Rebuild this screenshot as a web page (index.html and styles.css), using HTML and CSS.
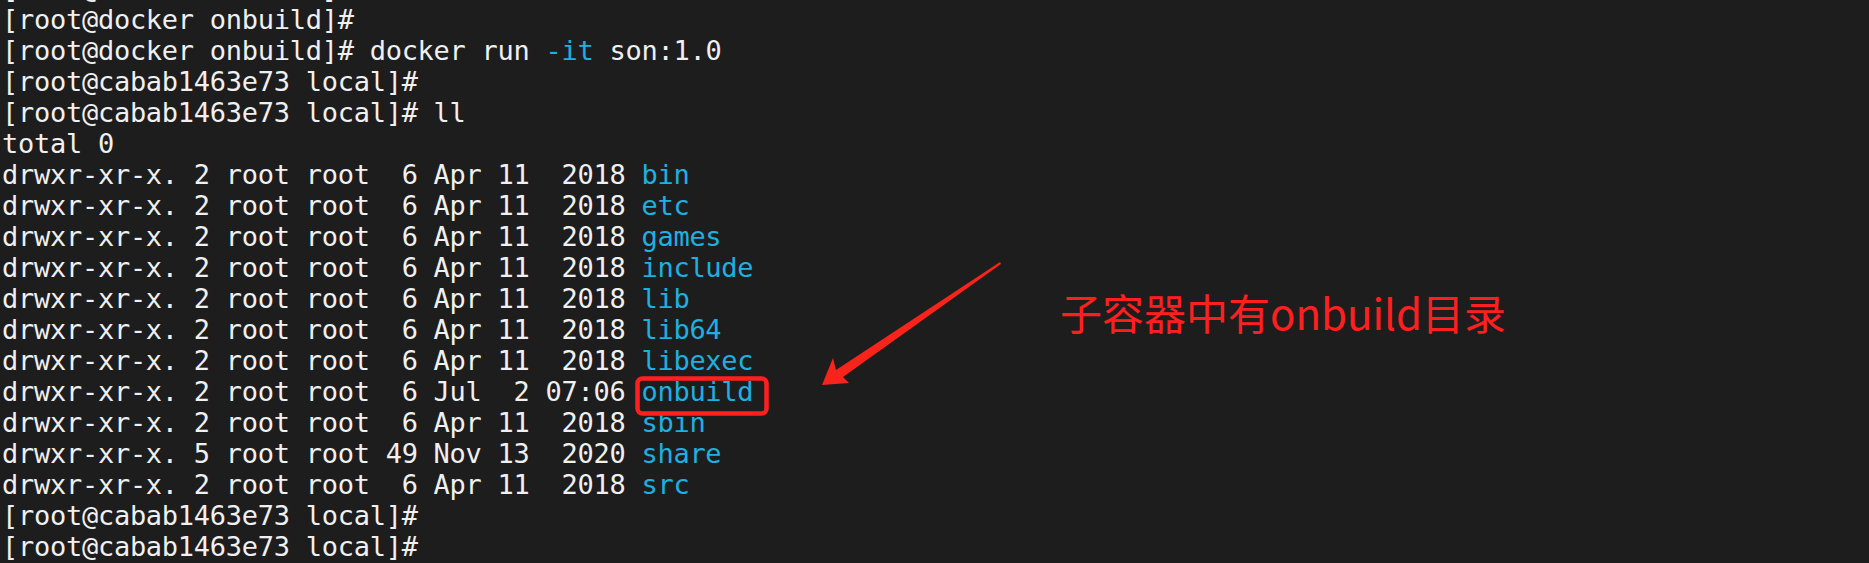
FILE: index.html
```html
<!DOCTYPE html>
<html>
<head>
<meta charset="utf-8">
<link rel="stylesheet" href="styles.css">
</head>
<body>
<div class="term">
<div class="line">[root@docker onbuild]#</div>
<div class="line">[root@docker onbuild]#</div>
<div class="line">[root@docker onbuild]# docker run <span class="blue">-it</span> son:1.0</div>
<div class="line">[root@cabab1463e73 local]#</div>
<div class="line">[root@cabab1463e73 local]# ll</div>
<div class="line">total 0</div>
<div class="line">drwxr-xr-x. 2 root root  6 Apr 11  2018 <span class="blue">bin</span></div>
<div class="line">drwxr-xr-x. 2 root root  6 Apr 11  2018 <span class="blue">etc</span></div>
<div class="line">drwxr-xr-x. 2 root root  6 Apr 11  2018 <span class="blue">games</span></div>
<div class="line">drwxr-xr-x. 2 root root  6 Apr 11  2018 <span class="blue">include</span></div>
<div class="line">drwxr-xr-x. 2 root root  6 Apr 11  2018 <span class="blue">lib</span></div>
<div class="line">drwxr-xr-x. 2 root root  6 Apr 11  2018 <span class="blue">lib64</span></div>
<div class="line">drwxr-xr-x. 2 root root  6 Apr 11  2018 <span class="blue">libexec</span></div>
<div class="line">drwxr-xr-x. 2 root root  6 Jul  2 07:06 <span class="blue">onbuild</span></div>
<div class="line">drwxr-xr-x. 2 root root  6 Apr 11  2018 <span class="blue">sbin</span></div>
<div class="line">drwxr-xr-x. 5 root root 49 Nov 13  2020 <span class="blue">share</span></div>
<div class="line">drwxr-xr-x. 2 root root  6 Apr 11  2018 <span class="blue">src</span></div>
<div class="line">[root@cabab1463e73 local]#</div>
<div class="line">[root@cabab1463e73 local]#</div>
</div>
<svg class="overlay" width="1869" height="563" viewBox="0 0 1869 563">
  <rect x="637.5" y="378.5" width="129" height="35" rx="5" ry="5" fill="none" stroke="#ff1f1f" stroke-width="4.5"/>
  <polygon points="1000,262 1001,264 843,377 849,383 822,385 833,358 836,370" fill="#f8231a"/>
</svg>
<div class="note">子容器中有onbuild目录</div>
</body>
</html>
```

FILE: styles.css
```css
html, body {
  margin: 0;
  padding: 0;
  background: #1d1d1d;
  width: 1869px;
  height: 563px;
  overflow: hidden;
}

body {
  position: relative;
}

.term {
  margin-top: -27px;
  padding-left: 2px;
  font-family: "DejaVu Sans Mono", monospace;
  font-size: 27px;
  letter-spacing: -0.27px;
  line-height: 31px;
  color: #f0f0f0;
}

.line {
  height: 31px;
  white-space: pre;
}

.blue {
  color: #1db1e2;
}

.overlay {
  position: absolute;
  left: 0;
  top: 0;
}

.note {
  position: absolute;
  left: 1060px;
  top: 291px;
  font-family: "Noto Sans CJK SC", sans-serif;
  font-size: 42px;
  line-height: 42px;
  color: #ff1f1f;
  white-space: nowrap;
}
```
